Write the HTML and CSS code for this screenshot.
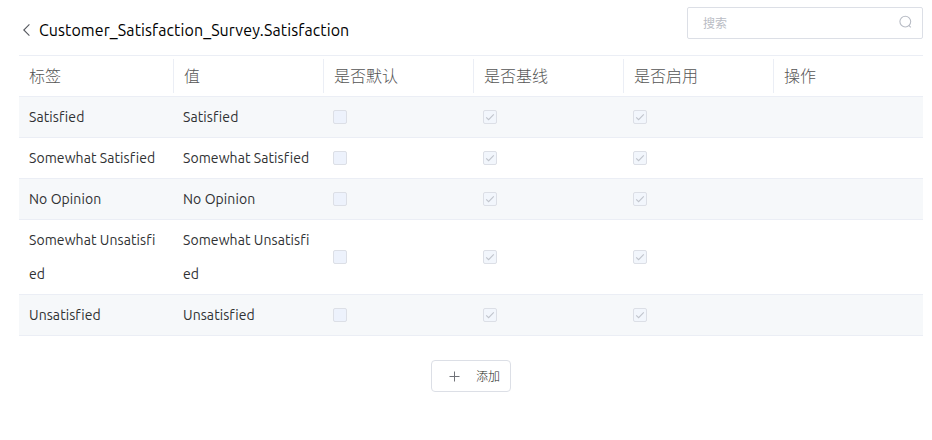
FILE: index.html
```html
<!DOCTYPE html>
<html lang="zh-CN">
<head>
  <meta charset="UTF-8">
  <title>Customer_Satisfaction_Survey.Satisfaction</title>
  <link rel="stylesheet" href="styles.css">
</head>
<body>
  <svg class="defs" width="0" height="0">
    <symbol id="check" viewBox="0 0 14 14"><path d="M3.2 7.4 L5.6 9.7 L10.8 4.4" /></symbol>
  </svg>

  <div class="header">
    <div class="title">
      <svg class="back" width="8" height="14" viewBox="0 0 8 14"><path d="M7.4 1.4 L1.8 7 L7.4 12.6" /></svg>
      <span class="title-text">Customer_Satisfaction_Survey.Satisfaction</span>
    </div>
    <div class="search">
      <input type="text" placeholder="搜索">
      <svg class="search-icon" width="14" height="14" viewBox="0 0 14 14"><circle cx="7.3" cy="6.6" r="5.4" /><path d="M10.6 10.2 L12.8 12.4" /></svg>
    </div>
  </div>

  <table class="options">
    <colgroup>
      <col class="col-label"><col><col><col><col><col>
    </colgroup>
    <thead>
      <tr>
        <th><div>标签</div></th>
        <th><div>值</div></th>
        <th><div>是否默认</div></th>
        <th><div>是否基线</div></th>
        <th><div>是否启用</div></th>
        <th><div>操作</div></th>
      </tr>
    </thead>
    <tbody>
      <tr>
        <td><span class="text">Satisfied</span></td>
        <td><span class="text">Satisfied</span></td>
        <td><span class="box"></span></td>
        <td><span class="box checked"><svg><use href="#check" /></svg></span></td>
        <td><span class="box checked"><svg><use href="#check" /></svg></span></td>
        <td></td>
      </tr>
      <tr>
        <td><span class="text">Somewhat Satisfied</span></td>
        <td><span class="text">Somewhat Satisfied</span></td>
        <td><span class="box"></span></td>
        <td><span class="box checked"><svg><use href="#check" /></svg></span></td>
        <td><span class="box checked"><svg><use href="#check" /></svg></span></td>
        <td></td>
      </tr>
      <tr>
        <td><span class="text">No Opinion</span></td>
        <td><span class="text">No Opinion</span></td>
        <td><span class="box"></span></td>
        <td><span class="box checked"><svg><use href="#check" /></svg></span></td>
        <td><span class="box checked"><svg><use href="#check" /></svg></span></td>
        <td></td>
      </tr>
      <tr>
        <td><span class="text">Somewhat Unsatisfied</span></td>
        <td><span class="text">Somewhat Unsatisfied</span></td>
        <td><span class="box"></span></td>
        <td><span class="box checked"><svg><use href="#check" /></svg></span></td>
        <td><span class="box checked"><svg><use href="#check" /></svg></span></td>
        <td></td>
      </tr>
      <tr>
        <td><span class="text">Unsatisfied</span></td>
        <td><span class="text">Unsatisfied</span></td>
        <td><span class="box"></span></td>
        <td><span class="box checked"><svg><use href="#check" /></svg></span></td>
        <td><span class="box checked"><svg><use href="#check" /></svg></span></td>
        <td></td>
      </tr>
    </tbody>
  </table>

  <div class="footer">
    <button class="add">
      <svg width="11" height="11" viewBox="0 0 11 11"><path d="M5.5 0.5 V10.5 M0.5 5.5 H10.5" /></svg>
      <span>添加</span>
    </button>
  </div>
</body>
</html>
```

FILE: styles.css
```css
* {
  box-sizing: border-box;
}
body {
  margin: 0;
  padding: 7px 9px 0 19px;
  background-color: #fff;
  color: #303133;
  font-family: Ubuntu, "Noto Sans", "Noto Sans CJK SC", sans-serif;
  font-size: 14px;
}
.defs {
  display: block;
}
.header {
  display: flex;
  justify-content: space-between;
  height: 48px;
}
.title {
  display: flex;
  align-items: center;
  height: 46px;
  padding-left: 3px;
  color: #000;
}
.title-text {
  margin-left: 9px;
  font-size: 16px;
  letter-spacing: 0.1px;
}
.back {
  fill: none;
  stroke: #55585e;
  stroke-width: 1.1;
}
.search {
  display: flex;
  align-items: center;
  width: 236px;
  height: 32px;
  padding: 0 10px 0 15px;
  border: 1px solid #dcdfe6;
  border-radius: 2px;
}
.search input {
  flex: 1;
  min-width: 0;
  padding: 0;
  border: none;
  outline: none;
  font-family: inherit;
  font-size: 12px;
}
.search input::placeholder {
  color: #b9bcc4;
}
.search-icon {
  fill: none;
  stroke: #b8bcc5;
  stroke-width: 1.1;
  margin-top: -2px;
}
.options {
  width: 904px;
  table-layout: fixed;
  border-collapse: separate;
  border-spacing: 0;
  border-top: 1px solid #ebeef5;
}
.col-label {
  width: 154px;
}
.options th,
.options td {
  padding: 3px 0;
  border-bottom: 1px solid #ebeef5;
  line-height: 34px;
  text-align: left;
  vertical-align: middle;
}
.options td {
  padding: 3px 10px;
}
.options th div {
  height: 34px;
  margin-right: -1px;
  padding-left: 11px;
  border-right: 1px solid #ebeef5;
  color: #555;
  font-size: 16px;
  font-weight: 300;
}
.options th:first-child div {
  padding-left: 10px;
}
.options th:last-child div {
  margin-right: 0;
  border-right: none;
}
.options tbody tr:nth-child(odd) {
  background-color: #f6f8fa;
}
.text {
  display: block;
  width: 129px;
  letter-spacing: 0.08px;
  word-break: break-all;
}
.box {
  display: block;
  width: 14px;
  height: 14px;
  border: 1px solid #dcdfe6;
  border-radius: 2px;
  background-color: #edf2fc;
}
.box.checked {
  background-color: #f2f6fc;
}
.box svg {
  display: block;
  width: 14px;
  height: 14px;
  margin: -1px;
  fill: none;
  stroke: #c0c4cc;
  stroke-width: 1.1;
}
.footer {
  display: flex;
  justify-content: center;
  padding-top: 24px;
}
.add {
  display: flex;
  align-items: center;
  gap: 16px;
  width: 80px;
  height: 32px;
  padding: 0 0 0 17px;
  border: 1px solid #dcdfe6;
  border-radius: 4px;
  background-color: #fff;
  color: #1c1e22;
  font-family: inherit;
  font-size: 12px;
  font-weight: 300;
}
.add span {
  padding-bottom: 2px;
}
.add svg {
  fill: none;
  stroke: #707278;
}
```
